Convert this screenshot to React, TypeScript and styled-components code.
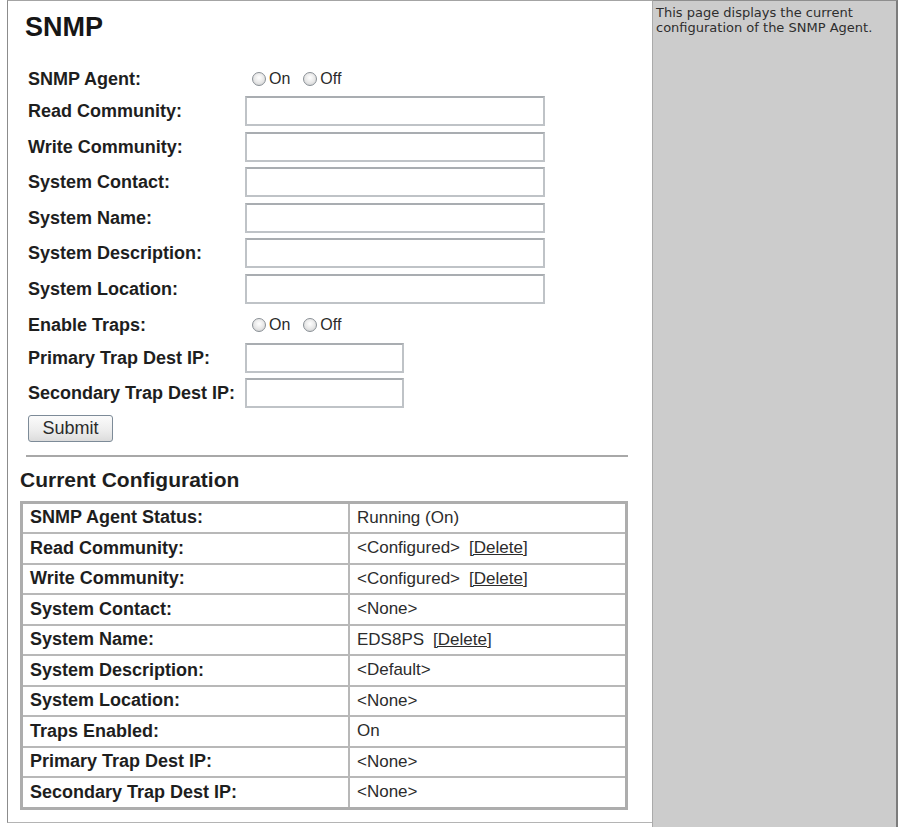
import React from "react";
import styled, { createGlobalStyle } from "styled-components";

const GlobalStyle = createGlobalStyle`
  html, body {
    margin: 0;
    padding: 0;
    background: #ffffff;
  }
  body {
    font-family: "Liberation Sans", Arial, sans-serif;
    color: #1c1c1c;
  }
`;

const Page = styled.div`
  display: flex;
  align-items: flex-start;
  width: 903px;
  height: 831px;
  padding-left: 7px;
  box-sizing: border-box;
`;

const Main = styled.main`
  box-sizing: border-box;
  width: 645px;
  height: 823px;
  border-left: 1px solid #8c8c8c;
  border-top: 1px solid #a4a4a4;
  border-bottom: 1px solid #b4b4b4;
  padding: 10px 24px 0 12px;
`;

const Title = styled.h1`
  margin: 0 0 19.5px 5px;
  font-size: 27px;
  line-height: 32px;
  font-weight: bold;
  color: #161616;
`;

const Form = styled.form`
  display: grid;
  grid-template-columns: 217px auto;
  row-gap: 5.5px;
  align-items: center;
  margin-left: 8px;
`;

const Label = styled.label<{ $radio?: boolean }>`
  box-sizing: border-box;
  padding-top: ${(p) => (p.$radio ? "4px" : "0")};
  font-size: 18px;
  line-height: 20px;
  font-weight: bold;
  color: #1e1e1e;
  white-space: nowrap;
`;

const RadioGroup = styled.div`
  box-sizing: border-box;
  display: flex;
  align-items: center;
  height: 28px;
  padding: 4px 0 0 7px;
  gap: 13px;
`;

const RadioOption = styled.label`
  display: flex;
  align-items: center;
  gap: 3px;
  font-size: 16px;
  color: #2a2a2a;
`;

const Radio = styled.input.attrs({ type: "radio" })`
  appearance: none;
  margin: 0;
  width: 14px;
  height: 14px;
  border-radius: 50%;
  border: 1px solid #8a9096;
  background: radial-gradient(circle at 50% 40%, #ffffff 0%, #e6e6e6 55%, #c4c6c8 100%);
  box-sizing: border-box;
`;

const TextField = styled.input<{ $short?: boolean }>`
  box-sizing: border-box;
  width: ${(p) => (p.$short ? "159px" : "300px")};
  height: 30px;
  margin: 0;
  border: 2px solid #bfc3c7;
  border-top-color: #a9adb1;
  background: #ffffff;
  font: 16px "Liberation Sans", Arial, sans-serif;
`;

const SubmitRow = styled.div`
  grid-column: 1 / -1;
  margin-top: 1px;
`;

const Button = styled.button`
  width: 85px;
  height: 27px;
  border: 1px solid #7d8b98;
  border-radius: 3px;
  background: linear-gradient(#fbfbfb, #ececec 60%, #dcdcdc);
  font: 18px "Liberation Sans", Arial, sans-serif;
  color: #2a2a2a;
  padding: 0;
`;

const Rule = styled.hr`
  margin: 13px 0 0 6px;
  border: 0;
  border-top: 2px solid #a8a8a8;
  height: 0;
`;

const SectionTitle = styled.h2`
  margin: 11px 0 9px 0;
  font-size: 21px;
  line-height: 24px;
  font-weight: bold;
  color: #1e1e1e;
`;

const ConfigTable = styled.table`
  width: 608px;
  border-collapse: collapse;
  border: 3px solid #adadad;
`;

const Cell = styled.td<{ $head?: boolean }>`
  height: 28.5px;
  padding: 0 0 0 7px;
  border: 2px solid #b8b8b8;
  font-size: ${(p) => (p.$head ? "18px" : "17px")};
  font-weight: ${(p) => (p.$head ? "bold" : "normal")};
  color: ${(p) => (p.$head ? "#1e1e1e" : "#2c2c2c")};
  width: ${(p) => (p.$head ? "318px" : "auto")};
  white-space: nowrap;
`;

const DeleteLink = styled.a`
  color: #2c2c2c;
  text-decoration: underline;
  margin-left: 9px;
`;

const Side = styled.aside`
  box-sizing: border-box;
  width: 246px;
  height: 827px;
  background: #cccccc;
  border-left: 1px solid #aaaaaa;
  border-top: 1px solid #8e8e8e;
  border-right: 2px solid #7c7c7c;
  padding: 4px 4px 0 3px;
  font-family: "DejaVu Sans", Verdana, sans-serif;
  font-size: 13px;
  line-height: 15px;
  color: #2e2e2e;
`;

type FieldDef = { label: string; kind: "radio" | "text" | "short"; name: string };

const fields: FieldDef[] = [
  { label: "SNMP Agent:", kind: "radio", name: "agent" },
  { label: "Read Community:", kind: "text", name: "read" },
  { label: "Write Community:", kind: "text", name: "write" },
  { label: "System Contact:", kind: "text", name: "contact" },
  { label: "System Name:", kind: "text", name: "sysname" },
  { label: "System Description:", kind: "text", name: "descr" },
  { label: "System Location:", kind: "text", name: "location" },
  { label: "Enable Traps:", kind: "radio", name: "traps" },
  { label: "Primary Trap Dest IP:", kind: "short", name: "trap1" },
  { label: "Secondary Trap Dest IP:", kind: "short", name: "trap2" },
];

type ConfigRow = { label: string; value: string; deletable?: boolean };

const config: ConfigRow[] = [
  { label: "SNMP Agent Status:", value: "Running (On)" },
  { label: "Read Community:", value: "<Configured>", deletable: true },
  { label: "Write Community:", value: "<Configured>", deletable: true },
  { label: "System Contact:", value: "<None>" },
  { label: "System Name:", value: "EDS8PS", deletable: true },
  { label: "System Description:", value: "<Default>" },
  { label: "System Location:", value: "<None>" },
  { label: "Traps Enabled:", value: "On" },
  { label: "Primary Trap Dest IP:", value: "<None>" },
  { label: "Secondary Trap Dest IP:", value: "<None>" },
];

export default function App() {
  return (
    <>
      <GlobalStyle />
      <Page>
        <Main>
          <Title>SNMP</Title>
          <Form onSubmit={(e) => e.preventDefault()}>
            {fields.map((f) => (
              <React.Fragment key={f.name}>
                <Label htmlFor={f.name} $radio={f.kind === "radio"}>
                  {f.label}
                </Label>
                {f.kind === "radio" ? (
                  <RadioGroup>
                    <RadioOption>
                      <Radio name={f.name} />
                      On
                    </RadioOption>
                    <RadioOption>
                      <Radio name={f.name} />
                      Off
                    </RadioOption>
                  </RadioGroup>
                ) : (
                  <TextField id={f.name} $short={f.kind === "short"} />
                )}
              </React.Fragment>
            ))}
            <SubmitRow>
              <Button type="submit">Submit</Button>
            </SubmitRow>
          </Form>
          <Rule />
          <SectionTitle>Current Configuration</SectionTitle>
          <ConfigTable>
            <tbody>
              {config.map((r) => (
                <tr key={r.label}>
                  <Cell $head>{r.label}</Cell>
                  <Cell>
                    {r.value}
                    {r.deletable && <DeleteLink href="#">[Delete]</DeleteLink>}
                  </Cell>
                </tr>
              ))}
            </tbody>
          </ConfigTable>
        </Main>
        <Side>
          This page displays the current configuration of the SNMP Agent.
        </Side>
      </Page>
    </>
  );
}
